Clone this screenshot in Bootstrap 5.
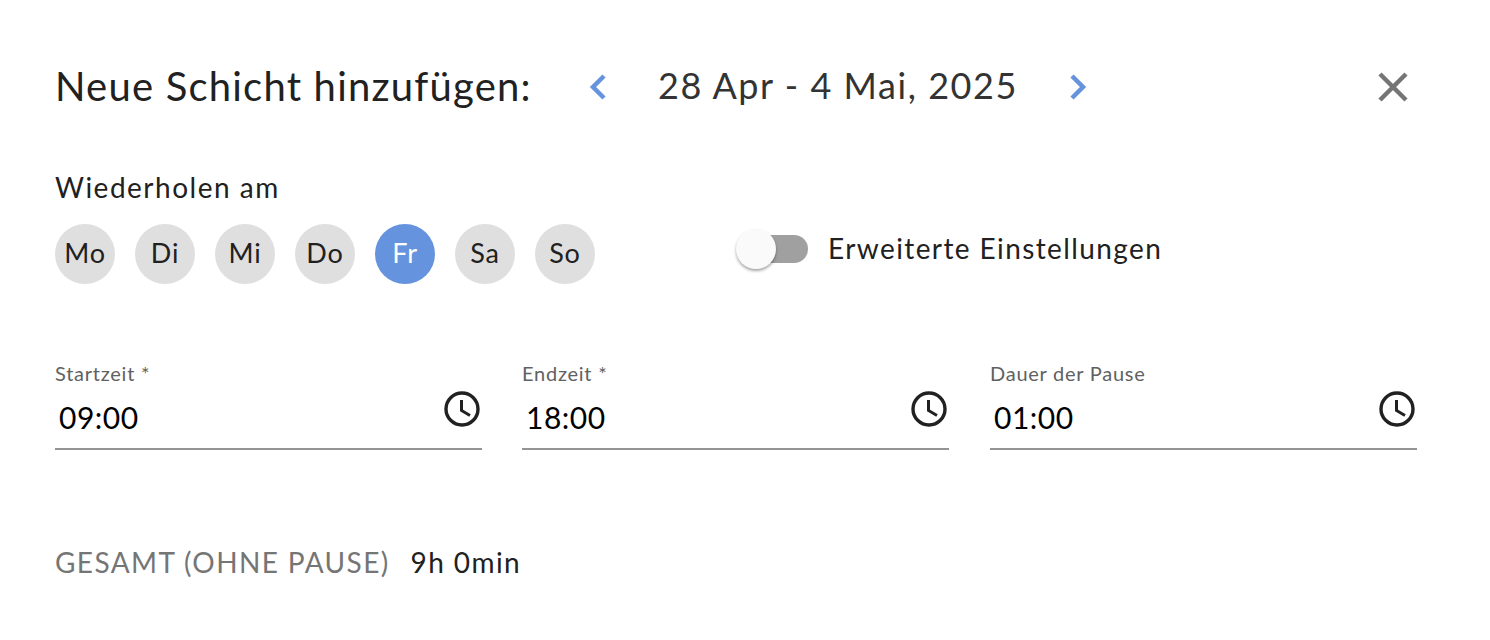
<!DOCTYPE html>
<html lang="de">
<head>
  <meta charset="UTF-8" />
  <meta name="viewport" content="width=device-width, initial-scale=1.0"/>
  <title>Neue Schicht</title>
  <link href="https://cdn.jsdelivr.net/npm/bootstrap@5.3.0/dist/css/bootstrap.min.css" rel="stylesheet">
  <style>
    body {
      background-color: #fff;
      font-family: "Lato", "Noto Sans", sans-serif;
      color: #212121;
    }
    .shift-form {
      width: 1490px;
      height: 640px;
      padding: 60px 73px 0 55px;
      overflow: hidden;
    }
    .shift-head {
      height: 54px;
    }
    .shift-title {
      font-size: 40px;
      line-height: 50px;
      letter-spacing: 1.2px;
      font-weight: 400;
      width: 531px;
      margin: 0 0 2px 0;
      white-space: nowrap;
    }
    .week-range {
      font-size: 36px;
      line-height: 50px;
      letter-spacing: 1.55px;
      color: #333;
      width: 456px;
      margin-bottom: 4px;
      text-align: center;
      white-space: nowrap;
    }
    .close-icon {
      margin-right: 6px;
    }
    .repeat-label {
      font-size: 28px;
      line-height: 36px;
      letter-spacing: 1.5px;
      margin-top: 55px;
    }
    .day-row {
      width: 681px;
      margin-top: 19px;
      gap: 20px;
    }
    .day-dot {
      width: 60px;
      height: 60px;
      padding-bottom: 2px;
      font-size: 27px;
      letter-spacing: .8px;
      background-color: #dfdfdf;
      color: #212121;
    }
    .day-dot.is-on {
      background-color: #6593dd;
      color: #fff;
    }
    .fake-track {
      width: 68px;
      height: 28px;
      margin-left: 4px;
      border-radius: 14px;
      background-color: #a0a0a0;
      position: relative;
    }
    .fake-thumb {
      position: absolute;
      left: -4px;
      top: -6px;
      width: 40px;
      height: 40px;
      border-radius: 50%;
      background-color: #fafafa;
      box-shadow: 0 2px 3px rgba(0,0,0,.35);
    }
    .adv-label {
      font-size: 28px;
      letter-spacing: 1.4px;
      margin-left: 20px;
      margin-bottom: 2px;
      line-height: 36px;
      white-space: nowrap;
    }
    .time-row {
      margin-top: 75px;
      gap: 40px;
    }
    .time-field {
      width: 427px;
      height: 91px;
      border-bottom: 2px solid #949494;
    }
    .time-label {
      font-size: 20px;
      line-height: 28px;
      color: #616161;
      letter-spacing: .75px;
    }
    .time-value {
      font-size: 30px;
      line-height: 40px;
      letter-spacing: .5px;
      color: #000;
      padding-left: 4px;
      padding-top: 10px;
    }
    .clock-icon {
      margin-top: 30px;
    }
    .total-row {
      margin-top: 94px;
      font-size: 28px;
      line-height: 36px;
      letter-spacing: 1.4px;
    }
    .total-label {
      color: #757575;
      margin-right: 21px;
    }
  </style>
</head>
<body>
  <div class="shift-form">
    <div class="shift-head d-flex align-items-center">
      <h1 class="shift-title">Neue Schicht hinzufügen:</h1>
      <svg width="24" height="30" viewBox="0 0 24 30"><path d="M18 4 L7 15 L18 26" fill="none" stroke="#6593dd" stroke-width="4.5"/></svg>
      <div class="week-range">28 Apr - 4 Mai, 2025</div>
      <svg width="24" height="30" viewBox="0 0 24 30"><path d="M6 4 L17 15 L6 26" fill="none" stroke="#6593dd" stroke-width="4.5"/></svg>
      <svg class="close-icon ms-auto" width="36" height="36" viewBox="0 0 36 36"><path d="M5 5 L31 31 M31 5 L5 31" fill="none" stroke="#757575" stroke-width="4.5"/></svg>
    </div>

    <div class="repeat-label">Wiederholen am</div>
    <div class="d-flex align-items-center">
      <div class="day-row d-flex flex-shrink-0">
        <div class="day-dot rounded-circle d-flex align-items-center justify-content-center">Mo</div>
        <div class="day-dot rounded-circle d-flex align-items-center justify-content-center">Di</div>
        <div class="day-dot rounded-circle d-flex align-items-center justify-content-center">Mi</div>
        <div class="day-dot rounded-circle d-flex align-items-center justify-content-center">Do</div>
        <div class="day-dot is-on rounded-circle d-flex align-items-center justify-content-center">Fr</div>
        <div class="day-dot rounded-circle d-flex align-items-center justify-content-center">Sa</div>
        <div class="day-dot rounded-circle d-flex align-items-center justify-content-center">So</div>
      </div>
      <div class="d-flex align-items-center mt-2">
        <div class="fake-track"><div class="fake-thumb"></div></div>
        <div class="adv-label">Erweiterte Einstellungen</div>
      </div>
    </div>

    <div class="time-row d-flex">
      <div class="time-field d-flex justify-content-between">
        <div>
          <div class="time-label">Startzeit *</div>
          <div class="time-value">09:00</div>
        </div>
        <svg class="clock-icon" width="40" height="40" viewBox="0 0 40 40"><circle cx="20" cy="20" r="16" fill="none" stroke="#212121" stroke-width="3.4"/><path d="M19.500 11 V21.500 L28 26.500" fill="none" stroke="#212121" stroke-width="3"/></svg>
      </div>
      <div class="time-field d-flex justify-content-between">
        <div>
          <div class="time-label">Endzeit *</div>
          <div class="time-value">18:00</div>
        </div>
        <svg class="clock-icon" width="40" height="40" viewBox="0 0 40 40"><circle cx="20" cy="20" r="16" fill="none" stroke="#212121" stroke-width="3.4"/><path d="M19.500 11 V21.500 L28 26.500" fill="none" stroke="#212121" stroke-width="3"/></svg>
      </div>
      <div class="time-field d-flex justify-content-between ms-auto">
        <div>
          <div class="time-label">Dauer der Pause</div>
          <div class="time-value">01:00</div>
        </div>
        <svg class="clock-icon" width="40" height="40" viewBox="0 0 40 40"><circle cx="20" cy="20" r="16" fill="none" stroke="#212121" stroke-width="3.4"/><path d="M19.500 11 V21.500 L28 26.500" fill="none" stroke="#212121" stroke-width="3"/></svg>
      </div>
    </div>

    <div class="total-row d-flex">
      <span class="total-label">GESAMT (OHNE PAUSE)</span>
      <span>9h 0min</span>
    </div>
  </div>
  <script src="https://cdn.jsdelivr.net/npm/bootstrap@5.3.0/dist/js/bootstrap.bundle.min.js"></script>
</body>
</html>
